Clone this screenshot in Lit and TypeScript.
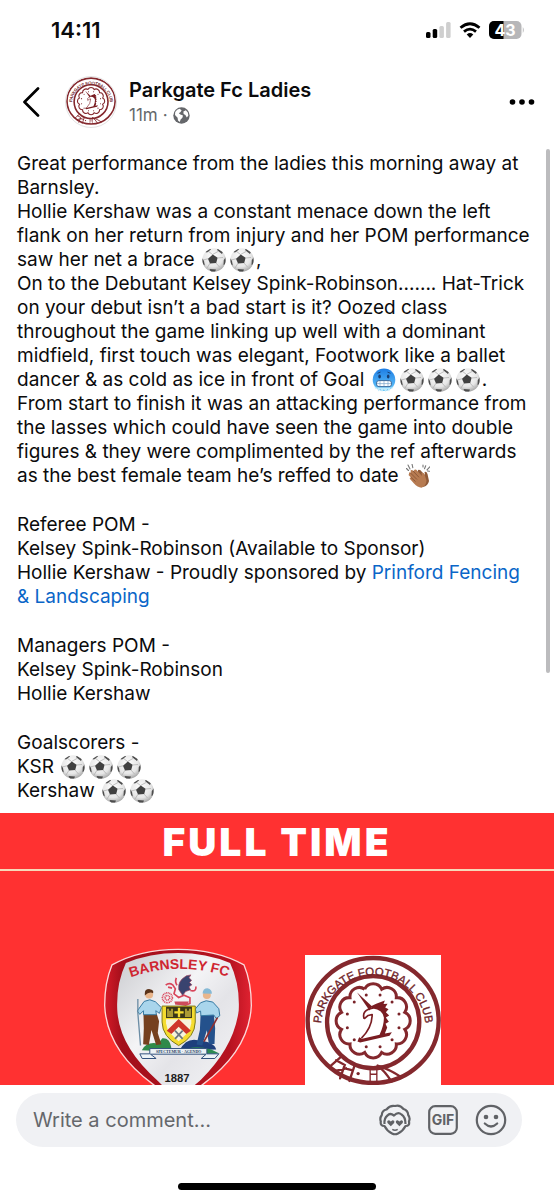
import { LitElement, html, css, svg } from "lit";
import { customElement, property } from "lit/decorators.js";

const polar = (cx: number, cy: number, r: number, deg: number) => {
  const a = (deg * Math.PI) / 180;
  return [cx + r * Math.cos(a), cy + r * Math.sin(a)];
};

const LOBES = 12;
const scallop = Array.from({ length: LOBES + 1 }, (_, i) => {
  const [x, y] = polar(249, 242, 98, (i * 360) / LOBES - 90 - 180 / LOBES);
  return `${i ? "A28 28 0 0 1 " : "M"}${x.toFixed(1)} ${y.toFixed(1)}`;
}).join(" ");
const studs = Array.from({ length: LOBES }, (_, i) => polar(249, 242, 80, (i * 360) / LOBES - 90 - 180 / LOBES));

/** Round badge of Parkgate Football Club. */
@customElement("parkgate-crest")
export class ParkgateCrest extends LitElement {
  static styles = css`
    :host { display: block; background: #fff; overflow: hidden; }
    svg { display: block; width: 100%; }
    text { font: 400 34px "Liberation Sans", Arial, sans-serif; fill: #6f2328; stroke: #6f2328; stroke-width: 1; }
  `;
  render() {
    return html`<svg viewBox="45 45 407 400" role="img" aria-label="Parkgate Football Club crest">
      <g fill="none" stroke="#84282d" stroke-width="13">
        <ellipse cx="249" cy="241" rx="196" ry="187" />
        <circle cx="249" cy="246" r="138" />
        <path d=${scallop} stroke-width="9" />
      </g>
      <g fill="#7a2328">${studs.map(([x, y]) => svg`<circle cx=${x} cy=${y} r="4.5" />`)}</g>
      <path d="M201 157 L246 199 L238 211 Z" fill="#7a1d22" />
      <path d="M241 199 L258 191 L284 181 L280 192 L292 191 L285 202 L295 207 L287 216 L297 226 L287 232 L296 245 L286 251 L291 262 L284 280 L305 276 L298 287 L210 307 L202 304 L207 291 L216 296 L268 284 Q282 254 281 232 Q277 208 248 205 Z" fill="#7a1d22" />
      <path d="M222 236 Q216 217 232 209 Q241 203 250 204 M222 236 L234 226 L246 223 Q246 262 214 294" fill="none" stroke="#7a1d22" stroke-width="5" stroke-linejoin="round" />
      <g fill="none" stroke="#84282d" stroke-width="7" stroke-linecap="round">
        <path d="M150 352 L120 378 M138 360 l26 14 -14 40 M136 392 l32 -8 M164 384 l24 6 M194 374 L178 422 M262 376 Q300 388 332 410 M262 376 Q284 392 304 424" />
        <path d="M240 424 V384 h20 v40 M242 402 h16" stroke-width="4" />
      </g>
      <circle cx="204" cy="400" r="5" fill="#7a2328" />
      <path id="arc" d="M93 262 A156 156 0 1 1 405 262" fill="none" />
      <text><textPath href="#arc" startOffset="50%" text-anchor="middle">PARKGATE FOOTBALL CLUB</textPath></text>
    </svg>`;
  }
}

/** Shield of Barnsley FC with its supporters and coat of arms. */
@customElement("barnsley-crest")
export class BarnsleyCrest extends LitElement {
  static styles = css`
    :host { display: block; }
    svg { display: block; width: 100%; }
    .name { font: 700 42px "Liberation Sans", Arial, sans-serif; fill: #cf2530; }
    .year { font: 700 34px "Liberation Sans", Arial, sans-serif; fill: #1c1c1c; }
    .motto { font: 700 12px "Liberation Serif", serif; fill: #27405e; }
  `;
  render() {
    return html`<svg viewBox="42 22 446 480" role="img" aria-label="Barnsley FC crest">
      <defs>
        <linearGradient id="silver" x1="0" y1="0" x2="1" y2="1">
          <stop offset="0" stop-color="#c9cace" /><stop offset=".4" stop-color="#f4f4f6" /><stop offset=".6" stop-color="#e4e4e8" /><stop offset="1" stop-color="#f6f6f8" />
        </linearGradient>
        <linearGradient id="crimson" x1="0" y1="0" x2="1" y2="0">
          <stop offset="0" stop-color="#d61a28" /><stop offset=".12" stop-color="#a30f1b" /><stop offset=".85" stop-color="#b5121f" /><stop offset="1" stop-color="#e02231" />
        </linearGradient>
      </defs>
      <path d="M66 73 Q150 26 265 26 Q380 26 464 73 Q486 125 486 195 Q480 330 340 433 Q300 465 265 482 Q230 465 190 433 Q50 330 44 195 Q44 125 66 73 Z" fill="url(#crimson)" stroke="#fbd9da" stroke-width="4" />
      <path d="M108 67 Q180 37 265 37 Q350 37 422 67 Q452 130 448 210 Q434 320 334 419 Q300 450 265 470 Q230 450 206 424 Q88 320 82 210 Q78 130 108 67 Z" fill="url(#silver)" />
      <path id="top" d="M118 112 Q265 58 420 110" fill="none" />
      <text class="name"><textPath href="#top" startOffset="50%" text-anchor="middle">BARNSLEY FC</textPath></text>

      <path d="M156 330 Q170 303 205 310 L218 294 Q240 292 245 322 L235 334 Z" fill="#2f8a4a" />
      <path d="M270 330 Q290 292 325 300 Q375 305 380 328 Z" fill="#1e3f7c" />
      <path d="M275 334 Q310 312 365 328 L390 340 L350 344 Z" fill="#2c8a52" />

      <path d="M161 221 h40 l7 22 -4 35 11 34 -16 2 -14 -45 -8 45 -17 -2 2 -48 Z" fill="#75401f" />
      <path d="M163 183 L180 178 L197 184 L215 202 L209 219 L198 211 L200 223 L161 223 L161 211 L150 222 L142 212 Z" fill="#a9d5ec" stroke="#3579a2" stroke-width="3" />
      <circle cx="178" cy="162" r="12" fill="#e9b58b" />
      <path d="M165 158 Q165 145 180 146 Q193 148 190 158 Q178 152 165 165 Z" fill="#5a3219" />
      <path d="M144 176 V218 L152 316" fill="none" stroke="#6c8da5" stroke-width="4" />

      <path d="M333 224 h40 l4 40 -2 47 -17 1 -6 -42 -14 46 -17 -3 10 -44 Z" fill="#24518c" />
      <path d="M333 187 L350 181 L370 185 L388 205 L391 226 L380 235 L373 224 L334 226 L333 212 L321 218 L317 206 Z" fill="#a9d5ec" stroke="#3579a2" stroke-width="3" />
      <circle cx="352" cy="164" r="12" fill="#e9b58b" />
      <path d="M339 159 Q340 143 354 143 Q368 146 367 160 Z" fill="#86b9d5" />
      <path d="M384 232 L368 260 L343 304" fill="none" stroke="#8c3032" stroke-width="5" />

      <g fill="none" stroke="#d8455a" stroke-width="5">
        <path d="M228 134 q10 -9 21 -1 l8 12 -4 15 14 11 16 -7 18 8 0 17 -13 5 -25 -4 M302 150 q19 5 17 -12 M260 112 q-5 12 2 22 M247 143 l-12 -3" />
        <circle cx="233" cy="172" r="15" stroke-dasharray="3 2" /><circle cx="233" cy="172" r="7" stroke-dasharray="3 2" />
      </g>
      <path d="M267 147 Q263 122 290 106 L304 103 L298 112 L306 119 L300 126 L307 133 L298 139 L303 148 L288 153 L279 165 Z" fill="#39436f" stroke="#a44460" stroke-width="2" />
      <path d="M254 183 h44 l-5 10 h-36 Z" fill="#cc4b5d" />

      <path d="M217 197 H317 V245 Q316 290 267 316 Q218 290 217 245 Z" fill="#f5dc2f" stroke="#7d7a18" stroke-width="3" />
      <path d="M229 199 h78 v34 h-78 Z" fill="#3a3718" />
      <path d="M232 205 h6 v6 h6 v-6 h6 v25 h-18 Z M286 205 h6 v6 h6 v-6 h6 v25 h-18 Z" fill="#ab9b35" />
      <path d="M268 202 v29 M254 216 h28" stroke="#f5dc2f" stroke-width="7" />
      <path d="M229 237 h76 v12 l-6 24 -32 30 -32 -30 -6 -24 Z" fill="#f7f3dc" />
      <path d="M231 271 L267 236 L304 271 L290 281 L267 259 L245 281 Z" fill="#cf3529" />
      <path d="M256 271 l23 25 M279 271 l-23 25" stroke="#6a7580" stroke-width="5" />

      <path d="M150 341 H180 V325 H352 V341 H388 L376 355 H335 L350 342 H182 L199 355 H157 Z" fill="#edf3f7" stroke="#31517d" stroke-width="3" />
      <text class="motto" x="267" y="338" text-anchor="middle">SPECTEMUR · AGENDO</text>
      <text class="year" x="262" y="426" text-anchor="middle">1887</text>
    </svg>`;
  }
}

/** Emoji drawn at text size: a football, a freezing face or clapping hands. */
@customElement("inline-emoji")
export class InlineEmoji extends LitElement {
  @property() kind = "ball";
  static styles = css`
    :host { display: inline-block; width: 24px; height: 24px; margin: 0 2px; vertical-align: -6px; line-height: 0; }
    svg { display: block; width: 24px; height: 24px; }
  `;
  private ball() {
    return html`<svg viewBox="0 0 24 24" role="img" aria-label="football">
      <defs>
        <radialGradient id="g" cx=".45" cy=".35" r=".68"><stop offset="0" stop-color="#fff" /><stop offset=".65" stop-color="#e6e6e6" /><stop offset="1" stop-color="#a0a0a0" /></radialGradient>
        <clipPath id="c"><circle cx="12" cy="12" r="11.6" /></clipPath>
      </defs>
      <circle cx="12" cy="12" r="11.7" fill="url(#g)" />
      <g clip-path="url(#c)">
        <path d="M10.5 6.5 L6 3 M10.5 6.5 L16 3.5 M6 10.8 L1 12 M15.5 10 L21 9.5 M8 15.2 L5 20 M14 15 L17.5 19" stroke="#aaa" stroke-width=".7" />
        <path d="M10.8 6.6 L15.6 9.7 L14.2 15 L8 15.4 L6 10.7 Z" fill="#414141" />
        <path d="M3 4 L8 0 L9 1.5 L5 4.5 Z M15 0 L21 4 L20 6 L15.5 2.5 Z M0 10 L2 13 L2.8 17.5 L0 16 Z M24 9 L21.8 12 L21.5 17 L24 16 Z M7.5 21 L14 21.5 L13 24 L9 24 Z" fill="#4d4d4d" />
      </g>
    </svg>`;
  }
  private cold() {
    return html`<svg viewBox="0 0 24 24" role="img" aria-label="cold face">
      <defs><linearGradient id="g" x1="0" y1="0" x2="0" y2="1"><stop offset="0" stop-color="#1d7de4" /><stop offset="1" stop-color="#65c8fb" /></linearGradient></defs>
      <circle cx="12" cy="11.7" r="11.3" fill="url(#g)" />
      <ellipse cx="7.6" cy="8.5" rx="1.3" ry="1.9" fill="#173c6f" /><ellipse cx="16.2" cy="8.5" rx="1.3" ry="1.9" fill="#173c6f" />
      <path d="M5.5 5.3 l3 -1.2 M18.5 5.3 l-3 -1.2" stroke="#173c6f" stroke-width=".9" />
      <path d="M2 18 l1.6 3 1.5 -1 1.4 3.5 1.7 -2.8 1.8 3 1.8 -2.4 1.8 2.4 2 -3 1.4 2.8 1.5 -3.5 1.5 1 2 -3 -2.5 1.6 H4.5 Z" fill="#bfeafb" />
      <rect x="4.5" y="12.6" width="15" height="6" rx="2.5" fill="#fff" stroke="#315f93" stroke-width=".9" />
      <path d="M5 15.6 h14 M8 13 v5.2 M12 13 v5.2 M16 13 v5.2" stroke="#7ba5cc" stroke-width=".7" />
    </svg>`;
  }
  private clap() {
    return html`<svg viewBox="0 0 24 24" role="img" aria-label="clapping hands">
      <path d="M2 1 l2 4 M6 0 l.8 3.7 M.5 4.5 l2 2 M18.5 4.8 l1.2 -3 M21 5.8 l2.8 -3 M17 3 l0 -2 M21.5 7 l2 .2" stroke="#777" stroke-width="1.1" stroke-linecap="round" />
      <path d="M12 6 Q14 5 16 8 L19 11 L18.5 8 Q20.5 7 21.5 10 L23 17 Q22 22 17 23 L12 20 Z" fill="#8e5a38" />
      <path d="M3 10 Q2.5 7.5 5 8.5 L4.5 6.8 Q5.5 5 7.5 7 L8.5 5.8 Q10 5 11 6.5 L16 12 L15.5 9 Q17.5 8 18.5 10.5 L20.5 16.5 Q20 22.5 15.5 23.7 Q11.5 23.5 8 19.5 L4 15 Q3 13.3 5 13.5 L2.5 11 Z" fill="#b77b51" />
      <path d="M4.5 9 L11 15.5 M7 7 L13 13.3 M5 13.4 L9.5 17.5" stroke="#814f31" stroke-width=".8" fill="none" />
    </svg>`;
  }
  render() {
    return this.kind === "cold" ? this.cold() : this.kind === "clap" ? this.clap() : this.ball();
  }
}

const balls = (n: number) => Array.from({ length: n }, () => html`<inline-emoji></inline-emoji>`);

@customElement("app-root")
export class AppRoot extends LitElement {
  static styles = css`
    * { box-sizing: border-box; }
    :host { display: flex; flex-direction: column; height: 100vh; overflow: hidden; position: relative; background: #fff; color: #0b0b0c; font-family: Inter, "Noto Sans", sans-serif; }
    button { border: 0; padding: 0; background: none; color: inherit; display: block; }
    svg { display: block; }
    .status { flex: none; height: 60px; padding: 0 29px 0 51px; display: flex; align-items: center; justify-content: space-between; }
    .time { font-size: 22px; font-weight: 600; line-height: 24px; }
    .signals { display: flex; align-items: center; gap: 8px; }
    .charge { font: 700 16px Inter, sans-serif; fill: #fff; }
    .header { flex: none; height: 84px; padding: 0 19px 0 22px; display: flex; align-items: center; }
    .avatar { width: 52px; height: 52px; margin: 0 12px 0 25px; border: 1px solid #e3e3e3; border-radius: 50%; }
    .who { flex: 1; min-width: 0; }
    .name { margin: 0; font-size: 20px; line-height: 26px; font-weight: 600; }
    .meta { display: flex; align-items: center; gap: 5px; font-size: 17px; line-height: 24px; color: #65676b; }
    .feed { flex: 1; min-height: 0; overflow: hidden; }
    .post { padding: 8px 19px 10px 17px; display: flex; flex-direction: column; gap: 25px; font-size: 19px; line-height: 24px; }
    .post p { margin: 0; }
    .post a { color: #0a66c8; text-decoration: none; }
    .result { background: #ff3131; }
    .full { margin: 0; height: 58px; border-bottom: 2px solid #f6d9b8; color: #fff; text-align: center; font-size: 39px; line-height: 58px; font-weight: 900; letter-spacing: 3px; }
    .teams { display: flex; justify-content: center; align-items: flex-start; gap: 53px; padding: 77px 9px 40px 0; }
    .barnsley { width: 148px; }
    .parkgate { width: 136px; margin-top: 7px; }
    .thumb { position: absolute; top: 149px; right: 4px; width: 4px; height: 524px; border-radius: 2px; background: #bcbcbe; }
    .footer { flex: none; padding: 8px 32px 10px 16px; background: #fff; }
    .composer { height: 54px; padding: 0 15px 0 17px; border-radius: 27px; background: #f0f1f4; display: flex; align-items: center; gap: 16px; color: #606266; }
    .comment { flex: 1; min-width: 0; border: 0; padding: 0; background: none; outline: 0; font: 400 20px Inter, sans-serif; color: #1c1e21; }
    .comment::placeholder { color: #65676b; opacity: 1; }
    .gif { font: 700 14px Inter, sans-serif; fill: #606266; }
    .home { width: 198px; height: 7px; margin: 36px auto 0; border-radius: 4px; background: #000; }
    .homebar { padding-left: 16px; }
  `;

  render() {
    return html`
      <div class="status">
        <span class="time">14:11</span>
        <div class="signals">
          <svg width="25" height="16" viewBox="0 0 25 16" aria-label="Signal"><rect y="10" width="4.5" height="6" rx="1.5" /><rect x="6.7" y="7" width="4.5" height="9" rx="1.5" /><g fill="#cfcfcf"><rect x="13.4" y="4" width="4.5" height="12" rx="1.5" /><rect x="20.1" width="4.5" height="16" rx="1.5" /></g></svg>
          <svg width="22" height="16" viewBox="0 0 22 16" aria-label="Wi-Fi"><path d="M1.5 5.8 Q11 -2.4 20.5 5.8" fill="none" stroke="#000" stroke-width="2.8" /><path d="M5 9.6 Q11 4.6 17 9.6" fill="none" stroke="#000" stroke-width="2.8" /><path d="M7.7 12.4 Q11 9.6 14.3 12.4 L11 16 Z" /></svg>
          <svg width="36" height="18" viewBox="0 0 36 18" aria-label="Battery 43 percent"><rect width="32.5" height="18" rx="5" fill="#b7b7b9" /><path d="M5 0 H14.5 V18 H5 A5 5 0 0 1 0 13 V5 A5 5 0 0 1 5 0 Z" /><path d="M33.8 6 Q35.8 9 33.8 12 Z" fill="#b7b7b9" /><text class="charge" x="16" y="15" text-anchor="middle">43</text></svg>
        </div>
      </div>

      <header class="header">
        <button aria-label="Back"><svg width="18" height="30" viewBox="0 0 18 30"><path d="M16 1.5 L2.5 15 L16 28.5" fill="none" stroke="#000" stroke-width="2.7" stroke-linecap="round" stroke-linejoin="round" /></svg></button>
        <parkgate-crest class="avatar"></parkgate-crest>
        <div class="who">
          <h1 class="name">Parkgate Fc Ladies</h1>
          <div class="meta"><span>11m</span><span>·</span>
            <svg width="17" height="17" viewBox="0 0 17 17" aria-label="Public"><circle cx="8.5" cy="8.5" r="8.2" fill="#65676b" /><path d="M2.2 5 Q4 2.2 6.5 1.8 L8.6 3.2 L7.6 5 L5.8 6.2 L7.4 7.4 L10 8.6 L9.4 10.8 L7.6 12.4 L6.8 15 L5 13.6 L4.6 10.8 L2 8 Z M10.4 4.6 L12.8 3.2 L14.8 5.4 L15.4 8.6 L13.8 10.4 L12.4 8 L10.6 7 Z" fill="#fff" /></svg>
          </div>
        </div>
        <button aria-label="More options"><svg width="26" height="6" viewBox="0 0 26 6"><circle cx="3.5" cy="3" r="2.8" /><circle cx="13" cy="3" r="2.8" /><circle cx="22.5" cy="3" r="2.8" /></svg></button>
      </header>

      <main class="feed">
        <article class="post">
          <p>
            Great performance from the ladies this morning away at Barnsley.<br />
            Hollie Kershaw was a constant menace down the left flank on her return from injury and her POM performance saw her net a brace ${balls(2)},<br />
            On to the Debutant Kelsey Spink-Robinson....... Hat-Trick on your debut isn’t a bad start is it? Oozed class throughout the game linking up well with a dominant midfield, first touch was elegant, Footwork like a ballet dancer &amp; as cold as ice in front of Goal <inline-emoji kind="cold"></inline-emoji>${balls(3)}.<br />
            From start to finish it was an attacking performance from the lasses which could have seen the game into double figures &amp; they were complimented by the ref afterwards as the best female team he’s reffed to date <inline-emoji kind="clap"></inline-emoji>
          </p>
          <p>Referee POM -<br />Kelsey Spink-Robinson (Available to Sponsor)<br />Hollie Kershaw - Proudly sponsored by <a href="#sponsor">Prinford Fencing &amp; Landscaping</a></p>
          <p>Managers POM -<br />Kelsey Spink-Robinson<br />Hollie Kershaw</p>
          <p>Goalscorers -<br />KSR ${balls(3)}<br />Kershaw ${balls(2)}</p>
        </article>
        <section class="result">
          <h2 class="full">FULL TIME</h2>
          <div class="teams">
            <barnsley-crest class="barnsley"></barnsley-crest>
            <parkgate-crest class="parkgate"></parkgate-crest>
          </div>
        </section>
      </main>
      <div class="thumb"></div>

      <footer class="footer">
        <div class="composer">
          <input class="comment" type="text" aria-label="Write a comment" placeholder="Write a comment..." />
          <button aria-label="Avatar stickers"><svg width="32" height="32" viewBox="0 0 32 32" fill="none" stroke="#606266" stroke-width="2.2" stroke-linejoin="round"><path d="M5.5 22 Q1 22 1.8 17.5 Q.5 14 2.8 11 Q3 6.5 7.5 5.5 Q11 1 16 2 Q21 .5 24.5 5 Q29 6.5 29.2 11 Q31.5 14 30 17.5 Q31 22 26.5 22 Q24 27 19 29.5 Q16 31 13 29.5 Q8 27 5.5 22 Z" /><path d="M5.5 20 Q5 14 8.5 11.5 Q11 8.5 15 11.5 Q19 7.5 22.5 10.5 Q26.5 13 26.5 20" /><path d="M11.8 22.2 l-3.3 -3.2 q-1 -2.8 1.6 -2.8 l1.7 1.2 1.7 -1.2 q2.6 0 1.6 2.8 Z M20.4 22.2 l-3.3 -3.2 q-1 -2.8 1.6 -2.8 l1.7 1.2 1.7 -1.2 q2.6 0 1.6 2.8 Z" fill="#606266" stroke="none" /><path d="M13.3 25.3 Q16 27 18.7 25.3" stroke-width="1.5" /></svg></button>
          <button aria-label="GIF"><svg width="32" height="32" viewBox="0 0 32 32"><rect x="2.2" y="2.2" width="27.6" height="27.6" rx="6" fill="none" stroke="#606266" stroke-width="2.2" /><text class="gif" x="16" y="21" text-anchor="middle">GIF</text></svg></button>
          <button aria-label="Emoji"><svg width="32" height="32" viewBox="0 0 32 32"><circle cx="16" cy="16" r="14.2" fill="none" stroke="#606266" stroke-width="2.2" /><circle cx="11" cy="13" r="2.3" fill="#606266" /><circle cx="21" cy="13" r="2.3" fill="#606266" /><path d="M9.8 19.5 Q16 25.5 22.2 19.5" fill="none" stroke="#606266" stroke-width="2.2" stroke-linecap="round" /></svg></button>
        </div>
        <div class="homebar"><div class="home"></div></div>
      </footer>
    `;
  }
}
